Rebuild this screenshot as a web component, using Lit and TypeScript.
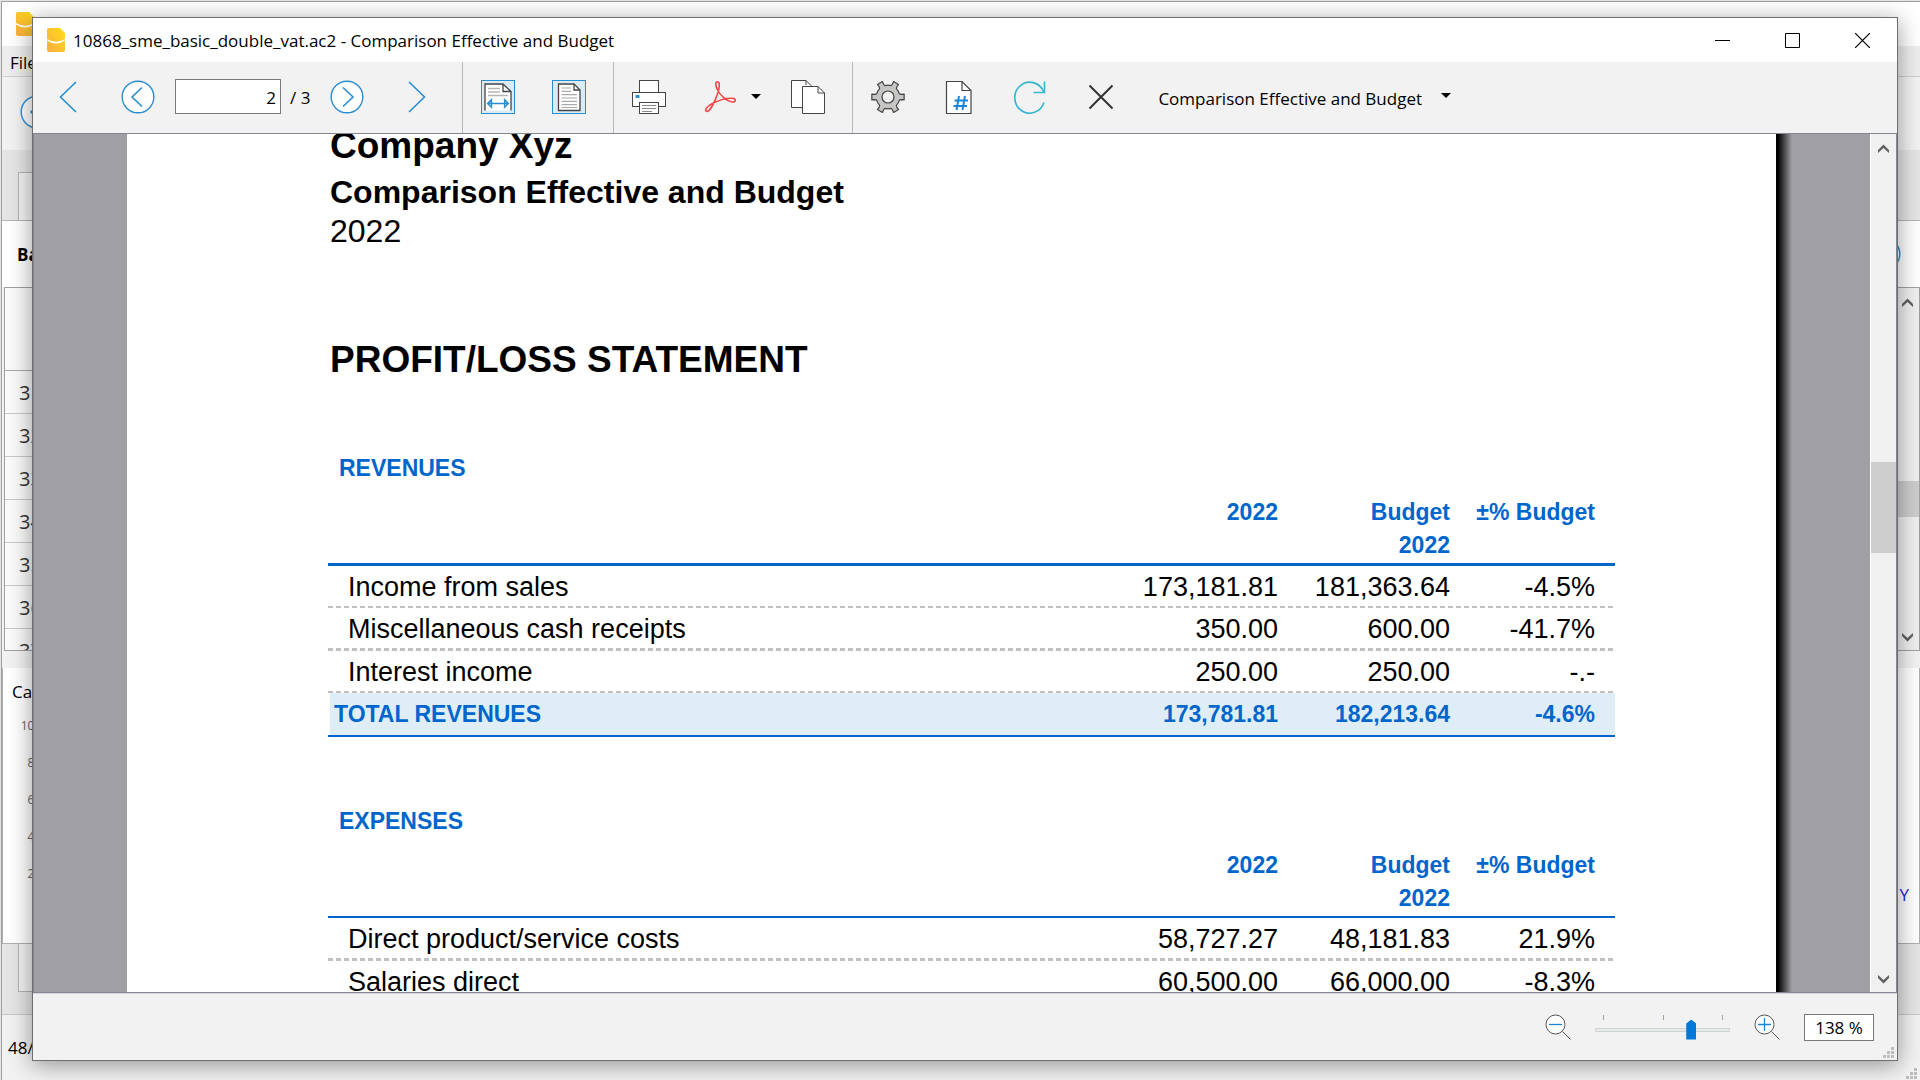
import { LitElement, html, css, svg } from "lit";
import { customElement, property } from "lit/decorators.js";
import { classMap } from "lit/directives/class-map.js";

const gearPath = (() => {
  const at = (deg: number, r: number) => {
    const a = (deg * Math.PI) / 180;
    return `${(17 + r * Math.cos(a)).toFixed(2)} ${(17 + r * Math.sin(a)).toFixed(2)}`;
  };
  let d = "";
  for (let i = 0; i < 6; i++) {
    const c = i * 60;
    d += `${i ? "L" : "M"}${at(c - 15, 11.8)} L${at(c - 11, 13.4)} L${at(c - 10, 16.4)} L${at(c + 10, 16.4)} L${at(c + 11, 13.4)} L${at(c + 15, 11.8)} A11.8 11.8 0 0 1 ${at(c + 45, 11.8)} `;
  }
  return d + "Z";
})();

const BLUE = "#2a8dd0";
const DARK = "#444";

const icons: Record<string, unknown> = {
  first: svg`<path d="M25 2 9.500 17 25 32" fill="none" stroke=${BLUE} stroke-width="1.600"/>`,
  last: svg`<path d="M9 2 24.500 17 9 32" fill="none" stroke=${BLUE} stroke-width="1.600"/>`,
  prev: svg`<circle cx="17" cy="17" r="15.800" fill="#fff" stroke=${BLUE} stroke-width="1.400"/><path d="M21 7.500 11 17 21 26.500" fill="none" stroke=${BLUE} stroke-width="1.600"/>`,
  next: svg`<circle cx="17" cy="17" r="15.800" fill="#fff" stroke=${BLUE} stroke-width="1.400"/><path d="M13 7.500 23 17 13 26.500" fill="none" stroke=${BLUE} stroke-width="1.600"/>`,
  fitWidth: svg`<rect x=".500" y=".500" width="33" height="33" fill="#d9ebf7" stroke=${BLUE}/>
    <path d="M4 30.500V4H22L30 11.500V30.500" fill="#fff"/>
    <path d="M4 30.500V4H22L30 11.500V30.500M22 4V11.500H30" fill="none" stroke=${DARK} stroke-width="1.300"/>
    <path d="M7 8.500H19M7 12H19M7 15.500H27" stroke="#b5b5b5" stroke-width="1.300"/>
    <path d="M7 23.500H27M10.500 19.500 6.500 23.500 10.500 27.500ZM23.500 19.500 27.500 23.500 23.500 27.500Z" fill="#b9daf0" stroke=${BLUE} stroke-width="1.300"/>`,
  fitPage: svg`<rect x=".500" y=".500" width="33" height="33" fill="#d9ebf7" stroke=${BLUE}/>
    <path d="M6.500 4H22L28 10V30.500H6.500Z" fill="#fff" stroke=${DARK} stroke-width="1.300"/>
    <path d="M22 4V10H28" fill="none" stroke=${DARK} stroke-width="1.300"/>
    <path d="M9.500 8H19M9.500 11.300H19M9.500 14.600H25M9.500 18H25M9.500 21.300H25M9.500 24.600H25M9.500 27.500H25" stroke="#aaa" stroke-width="1.200"/>`,
  print: svg`<rect x="7.500" y=".500" width="19" height="12" fill="#fff" stroke=${DARK}/>
    <rect x=".500" y="12.500" width="33" height="14" fill="#fff" stroke=${DARK}/>
    <rect x="3.500" y="15" width="4" height="3" fill=${BLUE}/>
    <rect x="7.500" y="22.500" width="19" height="11" fill="#fff" stroke=${DARK}/>
    <path d="M10 25.500H24M10 28.500H24M10 31.500H20" stroke="#888" stroke-width="1.200"/>`,
  pdf: svg`<path d="M14.500 1.800C17.300 1.800 16.500 8 14.500 14C12 21 7 31.700 3.800 31.400C.800 31 3.500 26.500 9 23.700C15 20.500 24 18 29 18.200C33.500 18.400 33.200 22.600 29 22C24 21.400 17.500 16 14.300 9.500C12.500 5.500 12 1.800 14.500 1.800Z" fill="none" stroke="#f04848" stroke-width="1.600"/>`,
  copy: svg`<path d="M.500.500H15L20.500 6V27.500H.500Z" fill="#fff" stroke=${DARK}/><path d="M15 .500V5" stroke=${DARK}/>
    <path d="M11.500 6.500H27L33.500 13V33.500H11.500Z" fill="#fff" stroke=${DARK}/><path d="M27 6.500V13H33.500" fill="none" stroke=${DARK}/>`,
  gear: svg`<path d=${gearPath} fill="#c6c5c3" stroke=${DARK} stroke-width="1.200" stroke-linejoin="round"/><circle cx="17" cy="17" r="6" fill="#f2f2f2" stroke=${DARK} stroke-width="1.200"/>`,
  number: svg`<path d="M4.500 1.500H20L29 10.500V33.500H4.500Z" fill="#fff" stroke=${DARK} stroke-width="1.200"/><path d="M20 1.500V10.500H29" fill="none" stroke=${DARK} stroke-width="1.200"/>
    <path d="M17 16 14.500 30M23 16 20.500 30M12.500 20.500H26M11.500 26H25" stroke="#1c86d2" stroke-width="2"/>`,
  refresh: svg`<path d="M31 22.500A15 15.500 0 1 1 30.500 11.500M31.500 1.500V12.500H20.500" fill="none" stroke="#35b6cf" stroke-width="1.600"/>`,
  close: svg`<path d="M5.500 5.500 28.500 28.500M28.500 5.500 5.500 28.500" stroke="#333" stroke-width="2"/>`,
};

interface Line {
  label: string;
  actual: string;
  budget: string;
  diff: string;
}
interface Section {
  title: string;
  rule: "thick" | "thin";
  lines: Line[];
  total?: Line;
}

const sections: Section[] = [
  {
    title: "REVENUES",
    rule: "thick",
    lines: [
      { label: "Income from sales", actual: "173,181.81", budget: "181,363.64", diff: "-4.5%" },
      { label: "Miscellaneous cash receipts", actual: "350.00", budget: "600.00", diff: "-41.7%" },
      { label: "Interest income", actual: "250.00", budget: "250.00", diff: "-.-" },
    ],
    total: { label: "TOTAL REVENUES", actual: "173,781.81", budget: "182,213.64", diff: "-4.6%" },
  },
  {
    title: "EXPENSES",
    rule: "thin",
    lines: [
      { label: "Direct product/service costs", actual: "58,727.27", budget: "48,181.83", diff: "21.9%" },
      { label: "Salaries direct", actual: "60,500.00", budget: "66,000.00", diff: "-8.3%" },
    ],
  },
];

const logo = () => html`<svg width="18" height="24" viewBox="0 0 18 24" aria-hidden="true">
  <defs><linearGradient id="g" x1="1" y1="0" x2="0" y2="1"><stop offset="0" stop-color="#ffdc18"/><stop offset="1" stop-color="#fbad42"/></linearGradient></defs>
  <path d="M2 0H13L18 5V22Q18 24 16 24H2Q0 24 0 22V2Q0 0 2 0Z" fill="url(#g)"/>
  <path d="M0 11Q9 16.500 18 11V12.500Q9 18.500 0 12.500Z" fill="#fff"/>
</svg>`;

const grip = () => html`<svg class="grip" width="11" height="11" viewBox="0 0 11 11" aria-hidden="true">
  <path d="M8 0h3v3h-3zM4 4h3v3h-3zM8 4h3v3h-3zM0 8h3v3h-3zM4 8h3v3h-3zM8 8h3v3h-3z" fill="#bdbdbd"/>
</svg>`;

const arrow = (dir: "up" | "down") => html`<svg width="11" height="9" viewBox="0 0 11 9" aria-hidden="true">
  <path d=${dir === "up" ? "M0 6 5.500 .500 11 6V9L5.500 4 0 9Z" : "M0 3 5.500 8.500 11 3V0L5.500 5 0 0Z"} fill="#606060"/>
</svg>`;

const caret = () => html`<svg class="caret" width="10" height="5" viewBox="0 0 10 5" aria-hidden="true"><path d="M0 0H10L5 5Z" fill="#000"/></svg>`;

const windowButtons = () => html`<div class="wbuttons">
  <button aria-label="Minimize"><svg width="15" height="15" viewBox="0 0 15 15"><path d="M0 7.500H15" stroke="#000"/></svg></button>
  <button aria-label="Maximize"><svg width="15" height="15" viewBox="0 0 15 15"><path d="M.500.500H14.500V14.500H.500Z" fill="none" stroke="#000"/></svg></button>
  <button aria-label="Close"><svg width="15" height="15" viewBox="0 0 15 15"><path d="M0 0 15 15M15 0 0 15" stroke="#000" stroke-width="1.200"/></svg></button>
</div>`;

const shared = css`
  * { box-sizing: border-box; }
  svg { display: block; flex: none; }
  button { appearance: none; border: 0; background: none; padding: 0; margin: 0; font: inherit; color: inherit; display: flex; align-items: center; justify-content: center; flex: none; }
  .wbuttons { display: flex; align-self: stretch; margin-left: auto; }
  .wbuttons button { width: 70px; }
  .grip { position: absolute; right: 3px; bottom: 2px; }
`;

@customElement("tool-icon")
class ToolIcon extends LitElement {
  @property() name = "";
  static styles = css`:host { display: block; } svg { display: block; }`;
  render() {
    return html`<svg width="34" height="34" viewBox="0 0 34 34" aria-hidden="true">${icons[this.name]}</svg>`;
  }
}

@customElement("main-window")
class MainWindow extends LitElement {
  static styles = [shared, css`
    :host { display: flex; flex-direction: column; position: relative; height: 100%; overflow: hidden; background: #f2f2f2; border: solid #a0a0a0; border-width: 1px 0 0 1px; white-space: nowrap; }
    .title { display: flex; align-items: center; height: 44px; padding-left: 14px; background: #fff; flex: none; }
    .menu { height: 31px; padding-left: 8px; line-height: 33px; background: #eee; border-bottom: 1px solid #cfcfcf; font-size: 17px; flex: none; }
    .tools { height: 73px; padding: 18px 18px; flex: none; }
    .tabs { height: 71px; background: #e5e5e5; border-bottom: 1px solid #b4b4b4; padding: 22px 0 0 16px; flex: none; }
    .tab { height: 48px; width: 160px; border: 1px solid #b4b4b4; border-bottom: 0; background: #f2f2f2; }
    .caption { display: flex; align-items: center; justify-content: space-between; height: 66px; padding: 0 19px 0 15px; background: #fff; font-weight: 700; font-size: 17px; flex: none; }
    .grid { display: flex; height: 364px; margin-left: 2px; border: 1px solid #a0a0a0; background: #fafafa; flex: none; overflow: hidden; }
    .rows { flex: 1; }
    .head { height: 83px; border-bottom: 1px solid #a8a8a8; }
    .row { height: 43px; padding-left: 14px; line-height: 44px; font-size: 20px; color: #333; border-bottom: 1px solid #c8c8c8; }
    .bar { width: 24px; background: #efefef; display: flex; flex-direction: column; align-items: center; padding: 10px 0 8px; }
    .thumb { width: 24px; height: 36px; margin: 174px 0 auto; background: #cdcdcd; }
    .chart { display: flex; flex: 1; margin-top: 17px; background: #fff; border: 1px solid #b0b0b0; border-top: 0; padding: 12px 10px 0 9px; justify-content: space-between; font-size: 17px; }
    .axis { list-style: none; margin: 4px 0 0; padding: 0; width: 43px; text-align: right; font-size: 12px; color: #666; }
    .axis li { height: 37px; line-height: 37px; }
    .key { align-self: center; padding-top: 166px; color: #22e; }
    .foot { height: 71px; background: #e5e5e5; border-bottom: 1px solid #c8c8c8; padding-left: 16px; flex: none; }
    .foot .tab { border: 1px solid #b4b4b4; border-top: 0; }
    .status { height: 66px; line-height: 66px; padding-left: 6px; font-size: 17px; flex: none; }
  `];
  render() {
    return html`
      <div class="title">${logo()}${windowButtons()}</div>
      <div class="menu">File</div>
      <div class="tools"><tool-icon name="prev"></tool-icon></div>
      <div class="tabs"><div class="tab"></div></div>
      <div class="caption"><span>Base</span><tool-icon name="next"></tool-icon></div>
      <div class="grid">
        <div class="rows">
          <div class="head"></div>
          ${[31, 32, 33, 34, 35, 36, 37].map((n) => html`<div class="row">${n}</div>`)}
        </div>
        <div class="bar">${arrow("up")}<div class="thumb"></div>${arrow("down")}</div>
      </div>
      <div class="chart">
        <div>
          <span>Cash</span>
          <ul class="axis">${["10000", "8000", "6000", "4000", "2000"].map((t) => html`<li>${t}</li>`)}</ul>
        </div>
        <span class="key">Y</span>
      </div>
      <div class="foot"><div class="tab"></div></div>
      <div class="status">48/100</div>
      ${grip()}
    `;
  }
}

@customElement("report-page")
class ReportPage extends LitElement {
  static styles = css`
    * { box-sizing: border-box; }
    :host { display: block; padding: 0 161px 0 201px; margin-top: -14px; font-family: "Liberation Sans", Arial, sans-serif; color: #000; }
    h1, h2, h3, p { margin: 0; font-weight: 700; padding-left: 2px; }
    h1 { font-size: 37px; line-height: 52px; }
    h2 { font-size: 32px; line-height: 40px; }
    p { font-size: 32px; font-weight: 400; line-height: 38px; }
    .statement { margin-top: 84px; }
    h3 { margin-top: 65px; padding-left: 11px; font-size: 23px; line-height: 34px; color: #0066cc; }
    table { width: 100%; margin-top: 10px; border-spacing: 0; table-layout: fixed; font-size: 27px; }
    .num { width: 172px; }
    .pct { width: 148px; }
    th, td { padding: 0 17px 0 0; text-align: right; height: 42px; line-height: 42px; vertical-align: top; font-weight: 400; }
    th:first-child, td:first-child { text-align: left; padding-left: 20px; }
    th:last-child, td:last-child { padding-right: 20px; }
    thead th { height: auto; padding-top: 1px; padding-bottom: 1px; line-height: 33px; border-bottom: 2px solid #0066cc; }
    thead th:last-child { padding-left: 0; white-space: nowrap; }
    .thick thead th { border-bottom-width: 3px; }
    thead th, .total th, .total td { font-weight: 700; font-size: 23px; color: #0066cc; }
    .line { background: repeating-linear-gradient(90deg, #c0c0c0 0 5px, #fff 5px 8px) 0 100% / 100% 2px no-repeat; }
    .thick .line:nth-child(even), .thin .line:nth-child(odd) { background-size: 100% 3px; }
    .thick .line:nth-child(even) > *, .thin .line:nth-child(odd) > * { height: 43px; }
    .total { background: linear-gradient(#dfeef6, #dfeef6) 2px 0 no-repeat; }
    .total th, .total td { height: 44px; border-bottom: 2px solid #0066cc; }
    .total th:first-child { padding-left: 6px; }
    .block + .block h3 { margin-top: 67px; }
  `;
  private row(l: Line, cls: string) {
    return html`<tr class=${cls}><th scope="row">${l.label}</th><td>${l.actual}</td><td>${l.budget}</td><td>${l.diff}</td></tr>`;
  }
  render() {
    return html`
      <h1>Company Xyz</h1>
      <h2>Comparison Effective and Budget</h2>
      <p>2022</p>
      <h1 class="statement">PROFIT/LOSS STATEMENT</h1>
      ${sections.map((s) => html`
        <section class=${classMap({ block: true, thick: s.rule === "thick", thin: s.rule === "thin" })}>
          <h3>${s.title}</h3>
          <table>
            <colgroup><col /><col class="num" /><col class="num" /><col class="pct" /></colgroup>
            <thead><tr><th></th><th scope="col">2022</th><th scope="col">Budget<br />2022</th><th scope="col">±% Budget</th></tr></thead>
            <tbody>${s.lines.map((l) => this.row(l, "line"))}${s.total ? this.row(s.total, "total") : ""}</tbody>
          </table>
        </section>`)}
    `;
  }
}

@customElement("preview-window")
class PreviewWindow extends LitElement {
  static styles = [shared, css`
    :host { display: flex; flex-direction: column; background: #f2f2f2; border: 1px solid #6e6e6e; box-shadow: 0 4px 22px rgba(0, 0, 0, 0.4); font-size: 17px; }
    .title { display: flex; align-items: center; gap: 8px; height: 44px; padding-left: 14px; background: #fff; flex: none; }
    .toolbar { display: flex; height: 72px; border-bottom: 1px solid #828790; flex: none; }
    .group { display: flex; align-items: center; gap: 37px; padding: 0 27px 2px 18px; border-right: 1px solid #b8b8b8; }
    .group:first-child { gap: 36px; padding-right: 28px; }
    .group:last-child { border: 0; }
    .pager { display: flex; align-items: center; }
    .pager label { margin: 2px 20px 0 9px; }
    .pager input { width: 106px; height: 35px; margin-left: 20px; padding: 2px 4px 0 0; border: 1px solid #7a7a7a; border-radius: 0; background: #fff; text-align: right; font: inherit; }
    .split { display: flex; align-items: center; gap: 14px; margin-right: -7px; }
    .combo { display: grid; align-items: center; margin-left: 3px; padding-top: 4px; }
    .combo select { grid-area: 1 / 1; appearance: none; border: 0; background: none; padding: 0 29px 0 0; font: inherit; color: inherit; }
    .combo .caret { grid-area: 1 / 1; justify-self: end; pointer-events: none; margin-bottom: 6px; }
    .view { display: flex; flex: 1; min-height: 0; overflow: hidden; background: #a09fa4; border: solid #828790; border-width: 0 1px 1px 1px; }
    .paper { flex: 1; margin-left: 93px; background: #fff; overflow: hidden; }
    .edge { width: 94px; background: linear-gradient(90deg, #000 0 2px, #a09fa4 16px); }
    .bar { display: flex; flex-direction: column; align-items: center; width: 26px; padding: 10px 0 8px; background: #f0f0f0; border-left: 1px solid #fff; }
    .thumb { width: 100%; height: 91px; margin: 309px 0 auto; background: #cdcdcd; }
    .status { position: relative; display: flex; align-items: center; justify-content: flex-end; gap: 24px; height: 67px; padding-right: 23px; border-top: 1px solid #d8d8dc; flex: none; }
    .slider { width: 135px; }
    .ticks { display: flex; justify-content: space-between; padding: 0 7px 0 8px; }
    .ticks span { width: 1px; height: 5px; background: #aaa396; }
    .slider input { appearance: none; display: block; width: 100%; height: 20px; margin: 0; background: linear-gradient(#e7eaea, #e7eaea) 50% 50% / 133px 2px no-repeat, linear-gradient(#d2d4d4, #d2d4d4) 50% 50% / 100% 4px no-repeat; }
    .slider input::-webkit-slider-thumb { appearance: none; width: 10px; height: 20px; background: #0078d7; clip-path: polygon(50% 0, 100% 4px, 100% 100%, 0 100%, 0 4px); }
    .status output { width: 70px; height: 27px; border: 1px solid #7a7a7a; background: #fff; line-height: 25px; text-align: center; }
  `];
  private tool(name: string, label: string) {
    return html`<button aria-label=${label}><tool-icon name=${name}></tool-icon></button>`;
  }
  render() {
    return html`
      <header class="title">${logo()}<span>10868_sme_basic_double_vat.ac2 - Comparison Effective and Budget</span>${windowButtons()}</header>
      <div class="toolbar">
        <div class="group">
          ${this.tool("first", "First page")}
          <div class="pager">
            ${this.tool("prev", "Previous page")}
            <input id="page" type="text" value="2" />
            <label for="page">/ 3</label>
            ${this.tool("next", "Next page")}
          </div>
          ${this.tool("last", "Last page")}
        </div>
        <div class="group">${this.tool("fitWidth", "Fit width")}${this.tool("fitPage", "Fit page")}</div>
        <div class="group">
          ${this.tool("print", "Print")}
          <div class="split">${this.tool("pdf", "Export to PDF")}<button aria-label="Export options">${caret()}</button></div>
          ${this.tool("copy", "Copy")}
        </div>
        <div class="group">
          ${this.tool("gear", "Settings")}${this.tool("number", "Page number")}${this.tool("refresh", "Refresh")}${this.tool("close", "Close preview")}
          <div class="combo">
            <select aria-label="Report"><option>Comparison Effective and Budget</option></select>
            ${caret()}
          </div>
        </div>
      </div>
      <div class="view">
        <div class="paper"><report-page></report-page></div>
        <div class="edge"></div>
        <div class="bar">${arrow("up")}<div class="thumb"></div>${arrow("down")}</div>
      </div>
      <footer class="status">
        <button aria-label="Zoom out">${this.lens(false)}</button>
        <div class="slider">
          <div class="ticks"><span></span><span></span><span></span></div>
          <input type="range" aria-label="Zoom" min="0" max="100" value="73" />
        </div>
        <button aria-label="Zoom in">${this.lens(true)}</button>
        <output>138 %</output>
        ${grip()}
      </footer>
    `;
  }
  private lens(plus: boolean) {
    return html`<svg width="26" height="26" viewBox="0 0 26 26" aria-hidden="true">
      <circle cx="10.500" cy="10.500" r="9.500" fill="#fff" stroke="#555"/>
      <path d="M17.500 17.500 25.500 25.500" stroke="#555"/>
      <path d=${plus ? "M4 10.500H17M10.500 4V17" : "M4 10.500H17"} stroke="#1c86d2" stroke-width="1.300"/>
    </svg>`;
  }
}

@customElement("app-root")
class AppRoot extends LitElement {
  static styles = css`
    :host { display: block; position: relative; height: 100vh; padding: 1px 0 0 1px; overflow: hidden; box-sizing: border-box; background: #e4e4e4; color: #000; font-family: "Open Sans", "Noto Sans", sans-serif; }
    .front { position: absolute; inset: 17px 22px 19px 32px; }
  `;
  render() {
    return html`<main-window></main-window><preview-window class="front"></preview-window>`;
  }
}
